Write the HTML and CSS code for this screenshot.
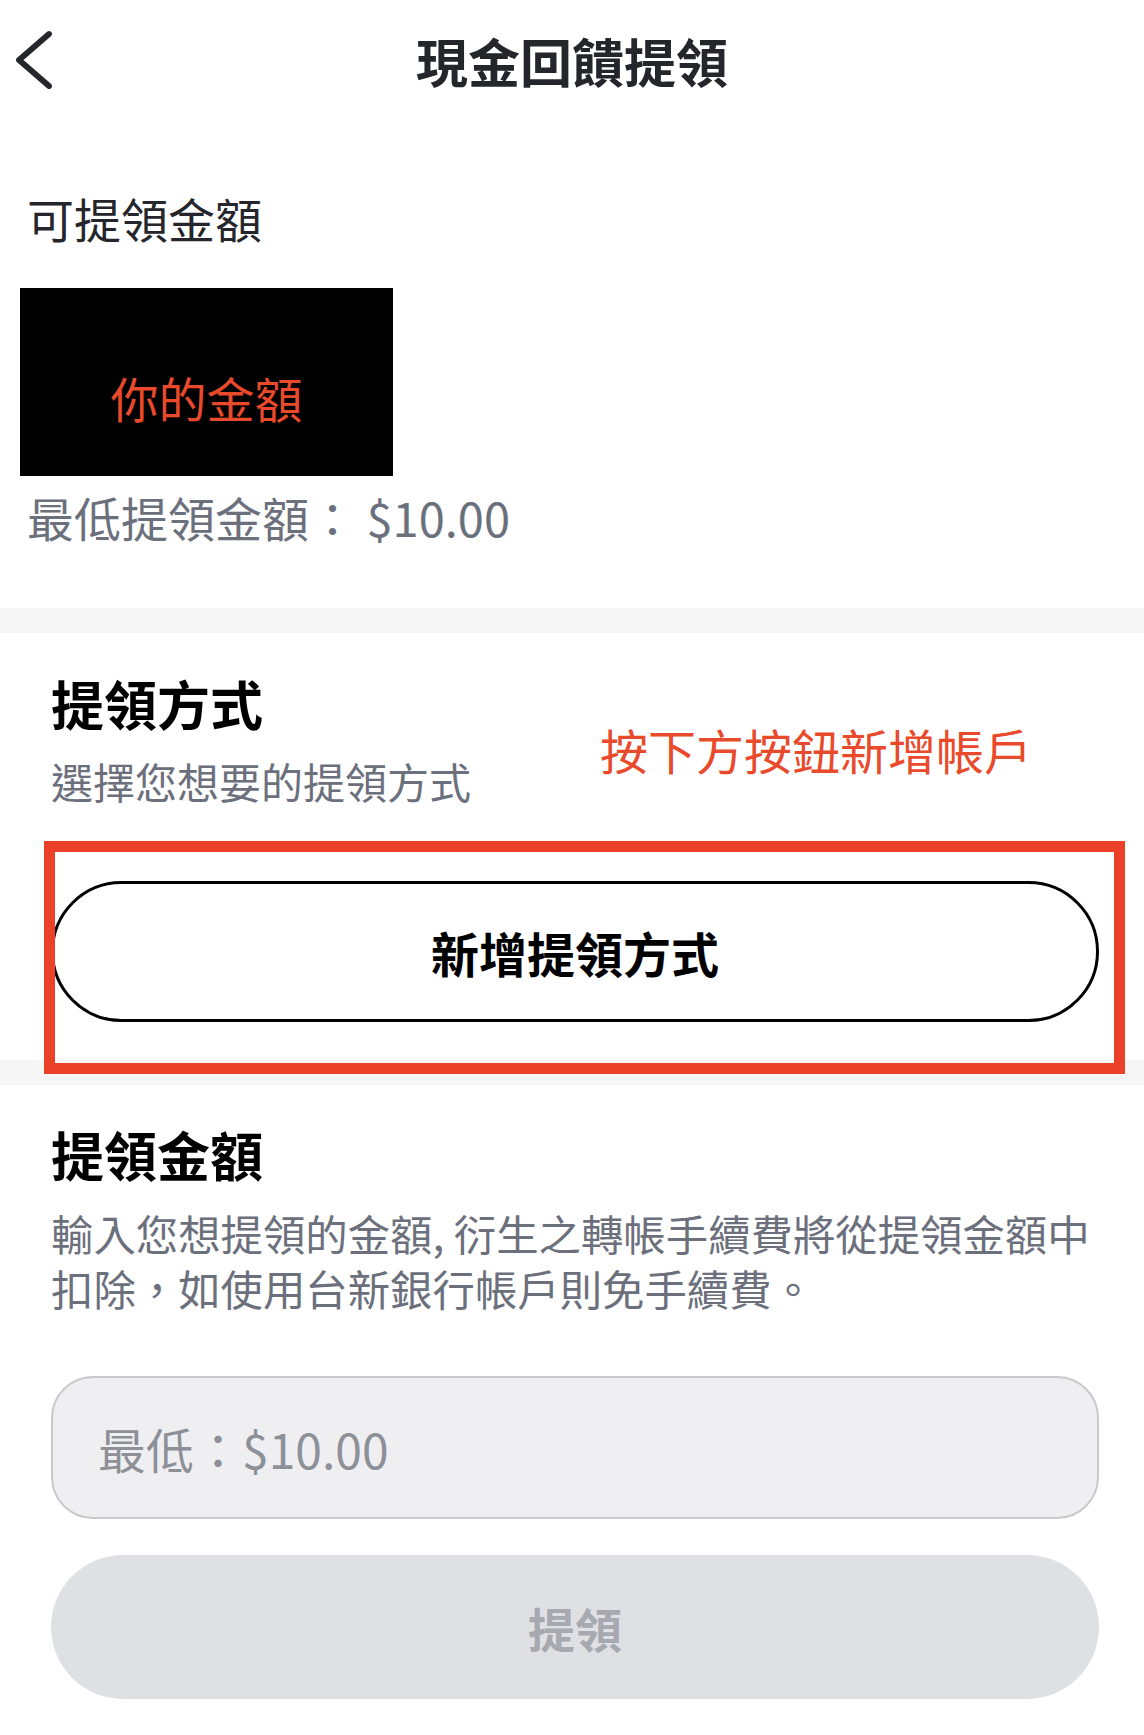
FILE: index.html
```html
<!DOCTYPE html>
<html lang="zh-Hant">
<head>
  <meta charset="UTF-8" />
  <meta name="viewport" content="width=device-width, initial-scale=1.0"/>
  <title>現金回饋提領</title>
  <link rel="stylesheet" href="styles.css">
</head>
<body>
  <!-- ENCABEZADO -->
  <header class="top-bar">
    <svg class="back-icon" viewBox="0 0 40 60" xmlns="http://www.w3.org/2000/svg">
      <polyline points="34,4 4,30 34,56" fill="none" stroke="#25262b" stroke-width="5.8" stroke-linecap="round" stroke-linejoin="round"/>
    </svg>
    <h1 class="page-title">現金回饋提領</h1>
  </header>

  <!-- SALDO -->
  <section class="balance">
    <div class="balance-label">可提領金額</div>
    <div class="balance-mask">你的金額</div>
    <div class="balance-min">最低提領金額： $10.00</div>
  </section>

  <div class="divider"></div>

  <!-- MÉTODO -->
  <section class="block method">
    <h2 class="block-title">提領方式</h2>
    <p class="block-sub">選擇您想要的提領方式</p>
    <div class="hint">按下方按鈕新增帳戶</div>
    <div class="add-wrap">
      <button class="add-btn">新增提領方式</button>
      <div class="red-frame"></div>
    </div>
  </section>

  <div class="divider"></div>

  <!-- MONTO -->
  <section class="block amount">
    <h2 class="block-title">提領金額</h2>
    <p class="block-sub desc">輸入您想提領的金額, 衍生之轉帳手續費將從提領金額中扣除，如使用台新銀行帳戶則免手續費。</p>
    <input class="amount-input" type="text" placeholder="最低：$10.00">
    <button class="submit-btn" disabled>提領</button>
  </section>
</body>
</html>
```

FILE: styles.css
```css
html, body {
  margin: 0;
  padding: 0;
  background-color: #fff;
  font-family: "Noto Sans CJK TC", "Noto Sans", sans-serif;
  color: #25262b;
}

.top-bar {
  position: relative;
  height: 122px;
  display: flex;
  align-items: center;
  justify-content: center;
}

.back-icon {
  position: absolute;
  left: 15px;
  top: 30px;
  width: 40px;
  height: 60px;
}

.page-title {
  margin: 0;
  font-size: 52px;
  font-weight: 700;
  line-height: 58px;
  color: #25262b;
}

.balance {
  padding: 66px 20px 61px;
}

.balance-label {
  margin-left: 7px;
  font-size: 47px;
  line-height: 60px;
  color: #25262b;
}

.balance-mask {
  box-sizing: border-box;
  margin-top: 40px;
  width: 373px;
  height: 188px;
  padding-top: 30px;
  background: #000;
  color: #ea4a2c;
  font-size: 48px;
  display: flex;
  align-items: center;
  justify-content: center;
}

.balance-min {
  margin: 11px 0 0 7px;
  font-size: 47px;
  line-height: 60px;
  color: #6c707c;
}

.divider {
  height: 25px;
  background: #f6f6f6;
}

.block {
  position: relative;
  padding: 38px 45px 0 51px;
}

.block-title {
  margin: 0;
  font-size: 53px;
  font-weight: 700;
  line-height: 64px;
  color: #000;
}

.block-sub {
  margin: 21px 0 0;
  font-size: 42px;
  line-height: 50px;
  color: #6c707c;
}

.hint {
  position: absolute;
  left: 600px;
  top: 86px;
  font-size: 48px;
  line-height: 60px;
  color: #ea4a2c;
}

.add-wrap {
  position: relative;
  margin-top: 75px;
  padding-bottom: 38px;
}

.add-btn {
  display: block;
  width: 100%;
  height: 141px;
  background: #fff;
  border: 3px solid #000;
  border-radius: 71px;
  font-family: inherit;
  font-size: 48px;
  font-weight: 700;
  color: #000;
}

.red-frame {
  position: absolute;
  left: -7px;
  top: -40px;
  right: -26px;
  height: 233px;
  box-sizing: border-box;
  border: 11px solid #ea4128;
  z-index: 2;
}

.amount {
  padding-top: 37px;
}

.desc {
  margin-top: 19px;
  font-size: 42.4px;
  line-height: 55px;
}

.amount-input {
  display: block;
  box-sizing: border-box;
  width: 100%;
  height: 143px;
  margin-top: 61px;
  padding: 0 45px;
  background: #efeff2;
  border: 2px solid #c9c9cd;
  border-radius: 42px;
  font-family: inherit;
  font-size: 48px;
  outline: none;
}

.amount-input::placeholder {
  color: #8e9098;
}

.submit-btn {
  display: block;
  width: 100%;
  height: 144px;
  margin-top: 36px;
  background: #dfe0e4;
  border: none;
  border-radius: 72px;
  font-family: inherit;
  font-size: 47px;
  font-weight: 700;
  color: #a7a9b0;
}
```
